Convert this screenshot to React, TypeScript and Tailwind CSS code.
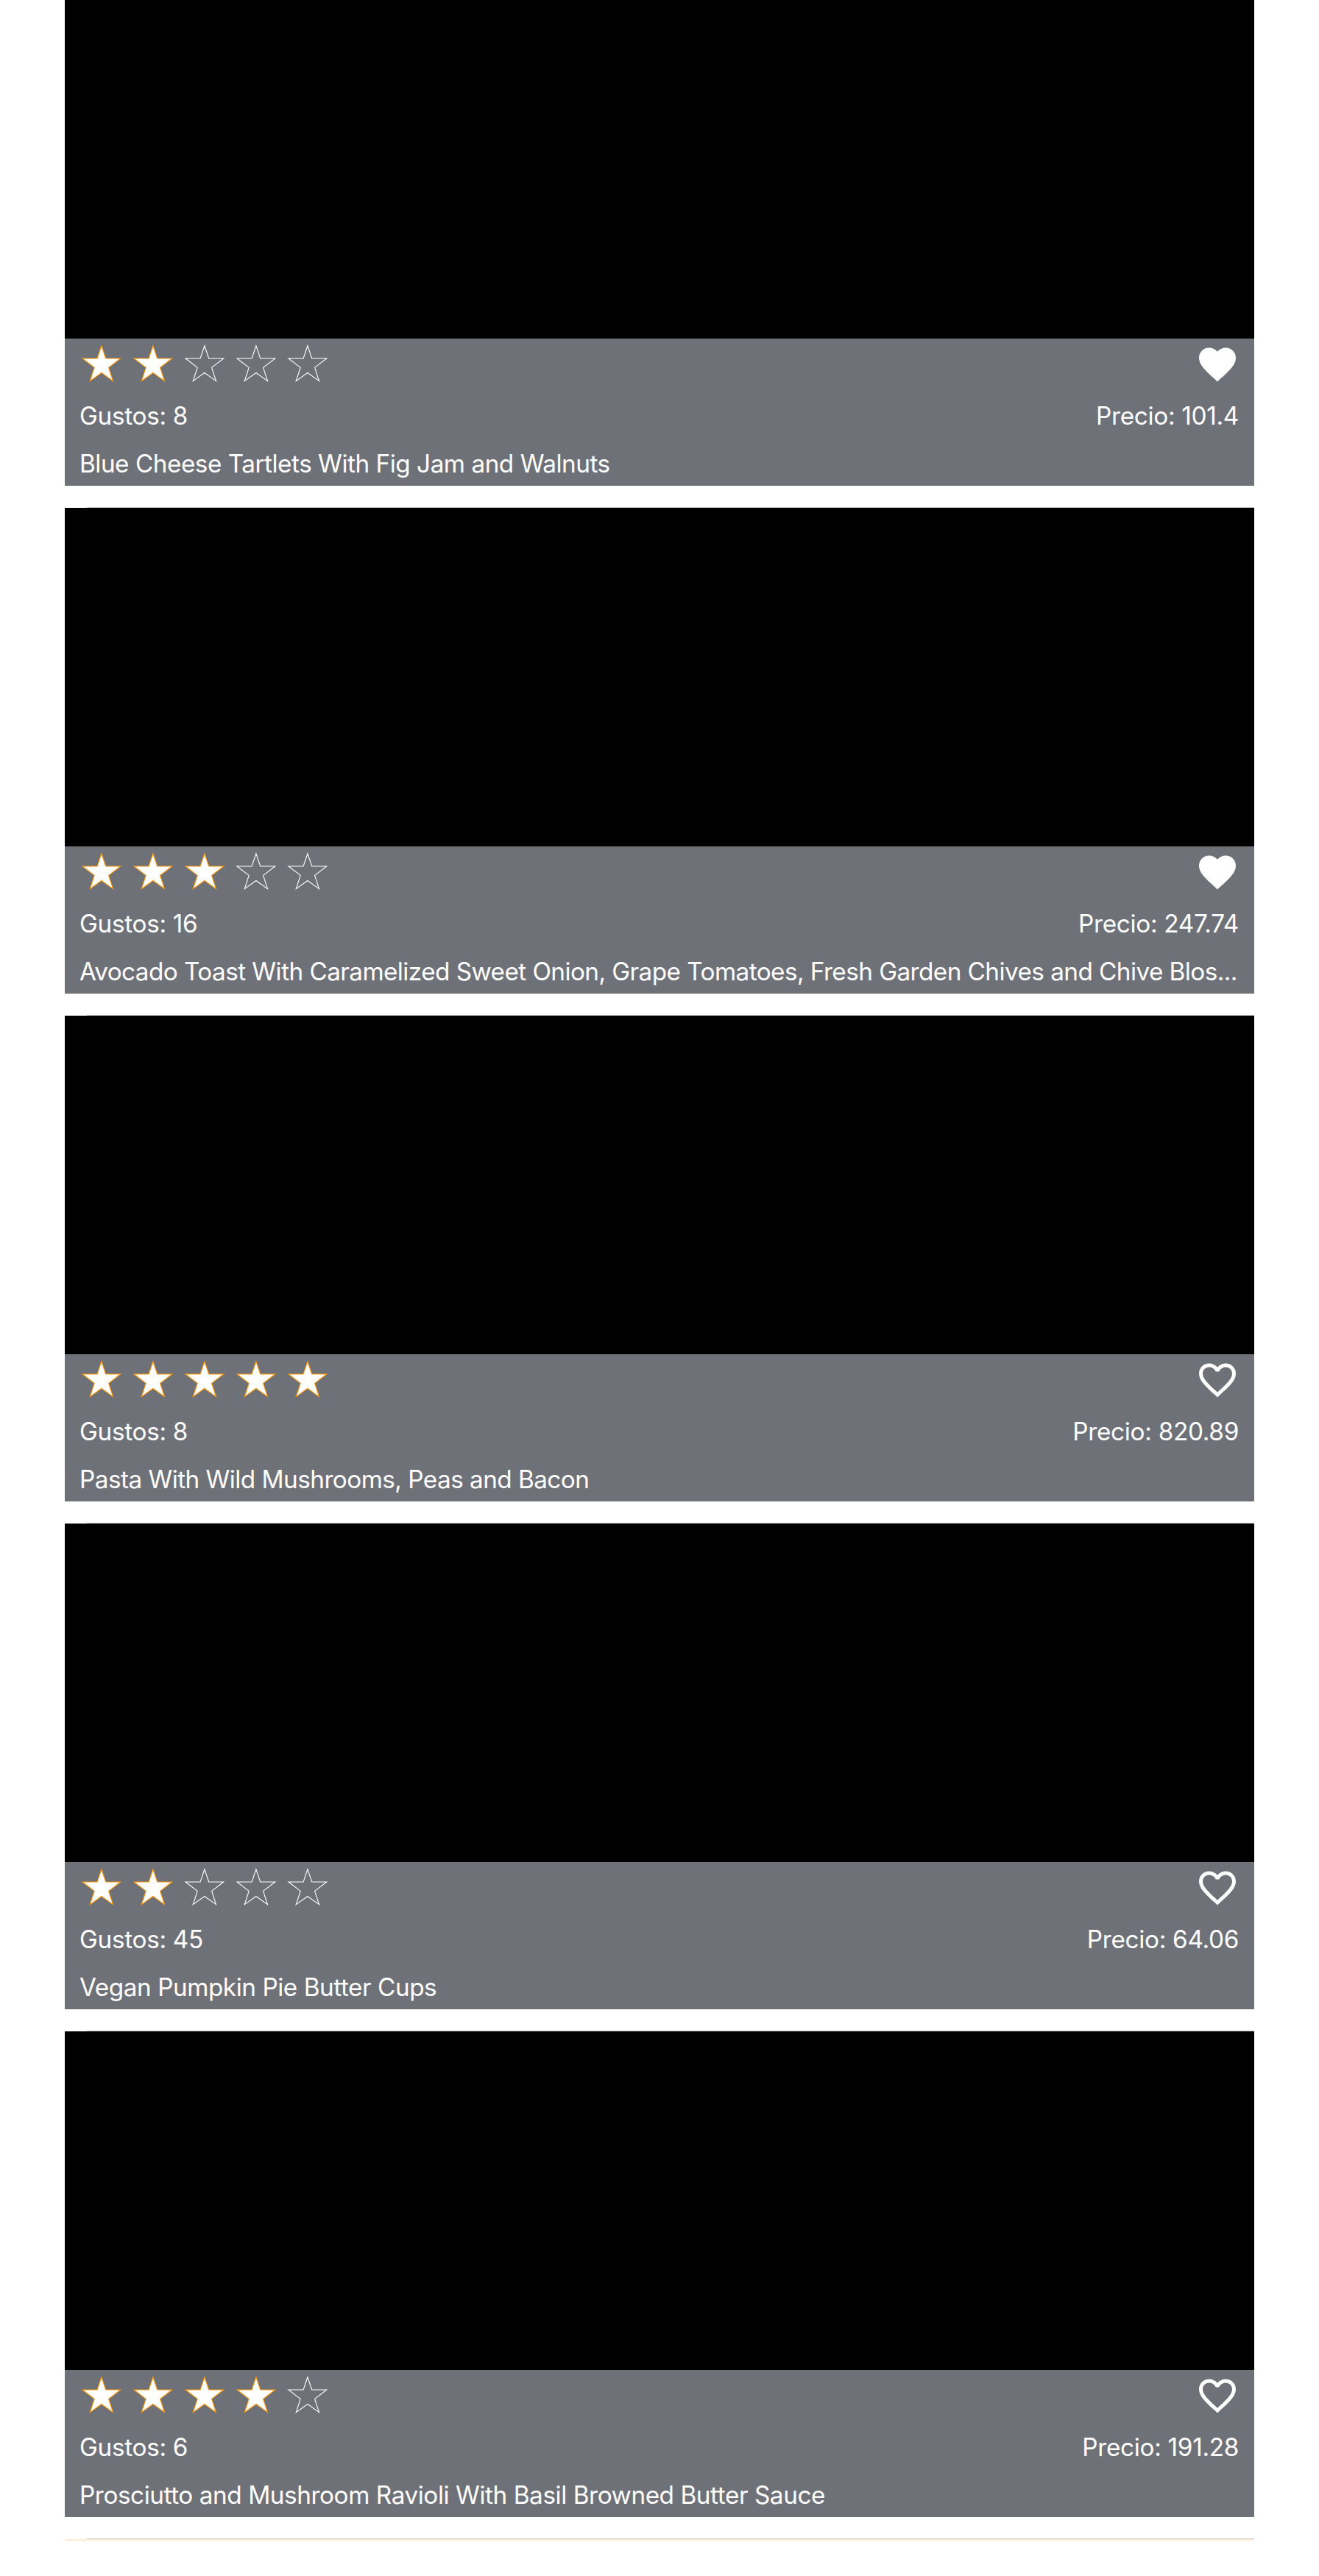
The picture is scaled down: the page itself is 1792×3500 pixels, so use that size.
import { MdFavorite, MdFavoriteBorder } from "react-icons/md";

const recipes = [
  { title: "Blue Cheese Tartlets With Fig Jam and Walnuts", likes: "8", price: "101.4", stars: 2, liked: true, tracking: "tracking-[-0.48px]" },
  { title: "Avocado Toast With Caramelized Sweet Onion, Grape Tomatoes, Fresh Garden Chives and Chive Blos...", likes: "16", price: "247.74", stars: 3, liked: true, tracking: "tracking-[-0.56px]" },
  { title: "Pasta With Wild Mushrooms, Peas and Bacon", likes: "8", price: "820.89", stars: 5, liked: false, tracking: "tracking-[-0.54px]" },
  { title: "Vegan Pumpkin Pie Butter Cups", likes: "45", price: "64.06", stars: 2, liked: false, tracking: "tracking-[-0.45px]" },
  { title: "Prosciutto and Mushroom Ravioli With Basil Browned Butter Sauce", likes: "6", price: "191.28", stars: 4, liked: false, tracking: "tracking-[-0.43px]" },
];

function Star({ filled }: { filled: boolean }) {
  return (
    <svg viewBox="0 0 60 60" className="h-[60px] w-[60px]">
      <path
        d="M29.9 4.8 L35.7 22 H55.8 L39.6 34.4 L45.5 52.7 L29.9 41.5 L14.3 52.7 L20.2 34.4 L4 22 H24.1 Z"
        fill={filled ? "#ffffff" : "none"}
        stroke={filled ? "#ff9500" : "#ffffff"}
        strokeWidth="1.1"
      />
    </svg>
  );
}

export default function App() {
  return (
    <main className="h-[3500px] w-full overflow-hidden bg-white px-[88px] font-['Inter',sans-serif] text-[33.3px] leading-[40px] text-white">
      {recipes.map((r) => (
        <article key={r.title}>
          <div className="h-[460px] bg-black" />
          <div className="h-[200px] bg-[#6f7179] px-5">
            <div className="flex h-[85px] justify-between pt-[5px]">
              <div className="flex gap-[10px]">
                {[1, 2, 3, 4, 5].map((n) => (
                  <Star key={n} filled={n <= r.stars} />
                ))}
              </div>
              {r.liked ? <MdFavorite className="size-[60px]" /> : <MdFavoriteBorder className="size-[60px]" />}
            </div>
            <div className="flex h-[65px] justify-between pr-px tracking-[-0.3px]">
              <span>Gustos: {r.likes}</span>
              <span>Precio: {r.price}</span>
            </div>
            <h2 className={`whitespace-nowrap ${r.tracking}`}>{r.title}</h2>
          </div>
          <div className="flex h-[30px] items-end pl-[30px]">
            <div className="h-px w-full bg-[#c6c6c8]" />
          </div>
        </article>
      ))}
      <div className="h-[2px] bg-[#ffedd5]" />
    </main>
  );
}
